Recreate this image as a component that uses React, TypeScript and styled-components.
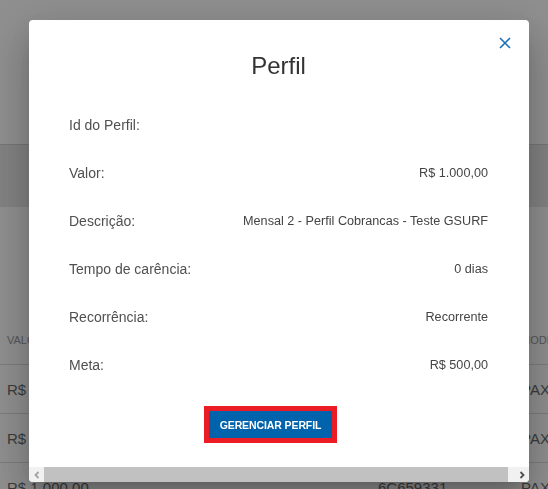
import React from "react";
import styled, { createGlobalStyle } from "styled-components";

const GlobalStyle = createGlobalStyle`
  html, body {
    margin: 0;
    padding: 0;
    background: #ffffff;
    overflow: hidden;
    font-family: "Liberation Sans", Arial, sans-serif;
  }
  * { box-sizing: border-box; }
`;

/* ---------- background page ---------- */
const Page = styled.div`
  width: 548px;
  height: 489px;
  display: flex;
  flex-direction: column;
  background: #ffffff;
  overflow: hidden;
`;

const Header = styled.header`
  height: 145px;
  flex: none;
  background: #ffffff;
  border-bottom: 1px solid #d2d2d2;
`;

const Toolbar = styled.div`
  height: 62px;
  flex: none;
  background: #e8e8e8;
`;

const Content = styled.section`
  padding-top: 109px;
`;

const TableRow = styled.div<{ $head?: boolean }>`
  display: grid;
  grid-template-columns: 371px 143px 1fr;
  height: 49px;
  align-items: center;
  border-bottom: 1px solid #dcdcdc;
  color: ${(p) => (p.$head ? "#9a9a9a" : "#6a6a6a")};
  font-size: ${(p) => (p.$head ? "11px" : "15px")};
  text-transform: ${(p) => (p.$head ? "uppercase" : "none")};
  white-space: nowrap;
`;

const Cell = styled.div`
  padding-left: 7px;
  overflow: hidden;
`;

/* ---------- modal ---------- */
const Overlay = styled.div`
  position: fixed;
  inset: 0;
  background: rgba(0, 0, 0, 0.44);
  display: flex;
  align-items: flex-start;
  padding: 20px 19px 0 29px;
`;

const Dialog = styled.div`
  width: 500px;
  height: 462px;
  background: #ffffff;
  border-radius: 4px;
  overflow: hidden;
  display: flex;
  flex-direction: column;
  box-shadow: 0 11px 15px -7px rgba(0, 0, 0, 0.2),
    0 24px 38px 3px rgba(0, 0, 0, 0.14), 0 9px 46px 8px rgba(0, 0, 0, 0.12);
`;

const Body = styled.div`
  position: relative;
  flex: 1;
  padding: 32px 41px 0 40px;
  display: flex;
  flex-direction: column;
`;

const CloseButton = styled.button`
  position: absolute;
  top: 14px;
  right: 15px;
  width: 18px;
  height: 18px;
  padding: 0;
  border: 0;
  background: transparent;
  display: flex;
  align-items: center;
  justify-content: center;
  cursor: pointer;
`;

const Title = styled.h2`
  margin: 0 0 21px;
  font-size: 24px;
  line-height: 28px;
  font-weight: 400;
  color: #333333;
  text-align: center;
`;

const InfoRow = styled.div`
  height: 48px;
  display: flex;
  align-items: center;
  justify-content: space-between;
`;

const Label = styled.span`
  font-size: 14px;
  color: #505050;
`;

const Value = styled.span`
  font-size: 12.65px;
  color: #444444;
`;

const Actions = styled.div`
  margin-top: 17px;
  display: flex;
  justify-content: center;
  padding-right: 16px;
`;

const Highlight = styled.div`
  border: 5px solid #ec1c24;
`;

const PrimaryButton = styled.button`
  display: block;
  height: 27px;
  padding: 0 11px;
  border: 0;
  border-radius: 0;
  background: #0063ab;
  color: #ffffff;
  font-family: "Liberation Sans", Arial, sans-serif;
  font-weight: 700;
  font-size: 10.5px;
  letter-spacing: -0.1px;
  cursor: pointer;
`;

/* ---------- fake horizontal scrollbar ---------- */
const ScrollBar = styled.div`
  height: 15px;
  flex: none;
  display: flex;
  background: #f1f1f1;
`;

const ScrollArrow = styled.div`
  width: 15px;
  flex: none;
  display: flex;
  align-items: center;
  justify-content: center;
`;

const Track = styled.div`
  flex: 1;
  display: flex;
`;

const Thumb = styled.div`
  flex: 1;
  margin-right: 6px;
  background: #c1c1c1;
`;

const rows = [
  { label: "Id do Perfil:", value: "" },
  { label: "Valor:", value: "R$ 1.000,00" },
  { label: "Descrição:", value: "Mensal 2 - Perfil Cobrancas - Teste GSURF" },
  { label: "Tempo de carência:", value: "0 dias" },
  { label: "Recorrência:", value: "Recorrente" },
  { label: "Meta:", value: "R$ 500,00" },
];

const tableRows = [
  ["R$ 1.000,00", "6C659330", "PAX D195"],
  ["R$ 1.000,00", "6C659332", "PAX D195"],
  ["R$ 1.000,00", "6C659331", "PAX D195"],
];

export default function App() {
  return (
    <>
      <GlobalStyle />
      <Page>
        <Header />
        <Toolbar />
        <Content>
          <TableRow $head>
            <Cell>Valor</Cell>
            <Cell>Número de série</Cell>
            <Cell>Modelo</Cell>
          </TableRow>
          {tableRows.map((r, i) => (
            <TableRow key={i}>
              {r.map((c, j) => (
                <Cell key={j}>{c}</Cell>
              ))}
            </TableRow>
          ))}
        </Content>
      </Page>
      <Overlay>
        <Dialog>
          <Body>
            <CloseButton aria-label="Fechar">
              <svg width="12" height="12" viewBox="0 0 12 12">
                <path
                  d="M1 1 L11 11 M11 1 L1 11"
                  stroke="#1a6fb8"
                  strokeWidth="1.6"
                  fill="none"
                />
              </svg>
            </CloseButton>
            <Title>Perfil</Title>
            {rows.map((r) => (
              <InfoRow key={r.label}>
                <Label>{r.label}</Label>
                <Value>{r.value}</Value>
              </InfoRow>
            ))}
            <Actions>
              <Highlight>
                <PrimaryButton>GERENCIAR PERFIL</PrimaryButton>
              </Highlight>
            </Actions>
          </Body>
          <ScrollBar>
            <ScrollArrow>
              <svg width="6" height="8" viewBox="0 0 6 8">
                <path d="M4.5 1 L1.5 4 L4.5 7" stroke="#a3a3a3" strokeWidth="1.8" fill="none" />
              </svg>
            </ScrollArrow>
            <Track>
              <Thumb />
            </Track>
            <ScrollArrow>
              <svg width="6" height="8" viewBox="0 0 6 8">
                <path d="M1.5 1 L4.5 4 L1.5 7" stroke="#505050" strokeWidth="1.8" fill="none" />
              </svg>
            </ScrollArrow>
          </ScrollBar>
        </Dialog>
      </Overlay>
    </>
  );
}
